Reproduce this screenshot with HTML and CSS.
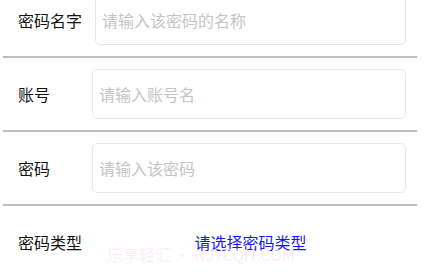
FILE: index.html
```html
<!DOCTYPE html>
<html lang="zh-CN">
<head>
  <meta charset="UTF-8">
  <meta name="viewport" content="width=device-width, initial-scale=1.0">
  <title>添加密码</title>
  <link rel="stylesheet" href="styles.css">
</head>
<body>
  <div class="form">
    <div class="row">
      <span class="label">密码名字</span>
      <input class="field" type="text" placeholder="请输入该密码的名称">
    </div>
    <div class="divider"></div>

    <div class="row">
      <span class="label">账号</span>
      <input class="field" type="text" placeholder="请输入账号名">
    </div>
    <div class="divider"></div>

    <div class="row">
      <span class="label">密码</span>
      <input class="field" type="password" placeholder="请输入该密码">
    </div>
    <div class="divider"></div>

    <div class="row">
      <span class="label">密码类型</span>
      <div class="picker">请选择密码类型</div>
    </div>
  </div>

  <!-- watermark over the page -->
  <div class="watermark">乐享轻汇 • NJYCQH.COM</div>
</body>
</html>
```

FILE: styles.css
```css
body {
  margin: 0;
  background: #fff;
  font-family: "Noto Sans CJK SC", "Noto Sans", sans-serif;
  color: #111;
  overflow: hidden;
  position: relative;
  height: 275px;
}

.form {
  width: 414px;
  margin: -16px 0 0 3px;
}

/* Rows */
.row {
  display: flex;
  align-items: center;
  height: 50px;
  padding: 11px 11px 11px 15px;
}

.label {
  min-width: 61px;
  margin-right: 13px;
  font-size: 16px;
  white-space: nowrap;
}

.field {
  flex: 1;
  height: 50px;
  box-sizing: border-box;
  border: 1px solid #e8e8e8;
  border-radius: 5px;
  padding: 0 6px;
  font-family: inherit;
  font-size: 16px;
  color: #111;
  outline: none;
  background: #fff;
}

.field::placeholder {
  color: #c4c4c4;
}

.picker {
  flex: 1;
  text-align: center;
  color: #1717f5;
  font-size: 16px;
}

.divider {
  height: 2px;
  background: #bcbcbc;
}

.watermark {
  position: absolute;
  left: 107px;
  top: 242px;
  font-size: 16px;
  color: #fdedf9;
  white-space: nowrap;
  pointer-events: none;
}
```
